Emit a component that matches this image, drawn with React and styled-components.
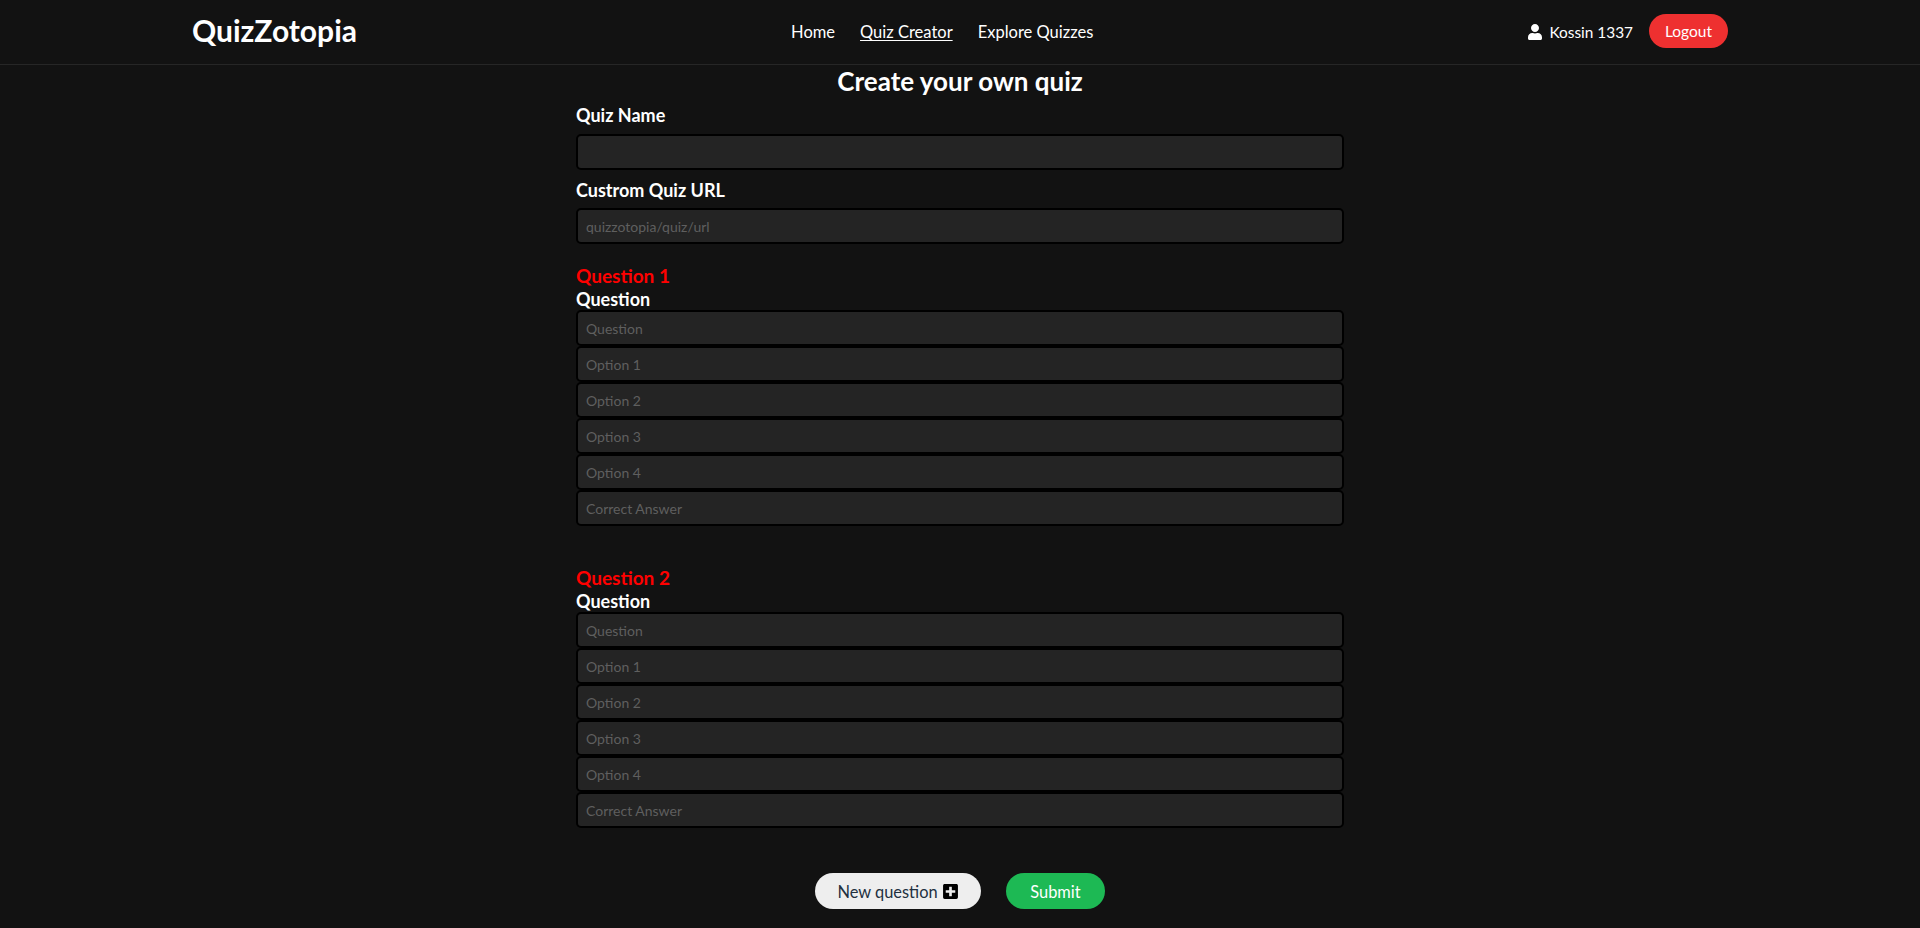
import React from "react";
import styled, { createGlobalStyle } from "styled-components";
import { FaUser, FaPlusSquare } from "react-icons/fa";

const Global = createGlobalStyle`
  html, body { margin: 0; padding: 0; background: #121212; }
  body { font-family: "Lato", "Liberation Sans", sans-serif; color: #fff; }
  * { box-sizing: border-box; }
`;

const Page = styled.div`
  min-height: 928px;
  background: #121212;
  display: flex;
  flex-direction: column;
`;

const Header = styled.header`
  height: 65px;
  border-bottom: 1px solid #262626;
  display: flex;
  justify-content: space-between;
  align-items: center;
  padding: 0 192px;
`;

const Logo = styled.div`
  font-size: 30px;
  font-weight: 700;
  line-height: 36px;
  margin-bottom: 5px;
`;

const Nav = styled.nav`
  display: flex;
  gap: 25px;
  font-size: 16.5px;
`;

const NavLink = styled.a`
  color: #fff;
  text-decoration: ${(p) => (p.$active ? "underline" : "none")};
  text-underline-offset: 2px;
`;

const UserArea = styled.div`
  display: flex;
  justify-content: flex-end;
  align-items: center;
  font-size: 15.4px;
`;

const UserName = styled.span`
  margin-left: 6px;
  margin-right: 16px;
`;

const Logout = styled.button`
  width: 79px;
  height: 34px;
  margin-bottom: 2px;
  border: 0;
  border-radius: 17px;
  background: #ee3030;
  color: #fff;
  font: 15.5px "Lato", sans-serif;
`;

const Form = styled.main`
  width: 768px;
  margin: 0 auto;
  display: flex;
  flex-direction: column;
`;

const Title = styled.h1`
  margin: 0;
  height: 38px;
  font-size: 26px;
  line-height: 32px;
  font-weight: 700;
  text-align: center;
`;

const Label = styled.label`
  display: block;
  font-size: 18px;
  font-weight: 700;
  line-height: ${(p) => p.$lh || 24}px;
  margin-bottom: ${(p) => p.$gap || 0}px;
`;

const Input = styled.input`
  display: block;
  width: 100%;
  height: 36px;
  padding: 0 8px;
  margin-bottom: ${(p) => p.$gap || 0}px;
  background: #242424;
  border: 2px solid #000;
  border-radius: 5px;
  outline: none;
  color: #fff;
  font: 14px "Lato", sans-serif;
  &::placeholder { color: #5f5f5f; opacity: 1; }
`;

const QuestionBlock = styled.section`
  margin-bottom: 40px;
`;

const QuestionTitle = styled.h2`
  margin: 0;
  font-size: 19px;
  line-height: 24px;
  font-weight: 700;
  color: #ff0000;
`;

const Actions = styled.div`
  display: flex;
  justify-content: center;
  gap: 25px;
  margin-top: 5px;
`;

const PillButton = styled.button`
  height: 36px;
  width: ${(p) => p.$w}px;
  border: 0;
  border-radius: 18px;
  background: ${(p) => p.$bg};
  color: ${(p) => p.$fg};
  font: 16.4px "Lato", sans-serif;
  display: flex;
  align-items: center;
  justify-content: center;
  gap: 4px;
`;

const fields = ["Question", "Option 1", "Option 2", "Option 3", "Option 4", "Correct Answer"];

export default function App() {
  return (
    <Page>
      <Global />
      <Header>
        <Logo>QuizZotopia</Logo>
        <Nav>
          <NavLink>Home</NavLink>
          <NavLink $active>Quiz Creator</NavLink>
          <NavLink>Explore Quizzes</NavLink>
        </Nav>
        <UserArea>
          <FaUser size={16} />
          <UserName>Kossin 1337</UserName>
          <Logout>Logout</Logout>
        </UserArea>
      </Header>
      <Form>
        <Title>Create your own quiz</Title>
        <Label $gap={7}>Quiz Name</Label>
        <Input $gap={8} />
        <Label $gap={6}>Custrom Quiz URL</Label>
        <Input $gap={20} placeholder="quizzotopia/quiz/url" />
        {[1, 2].map((n) => (
          <QuestionBlock key={n}>
            <QuestionTitle>Question {n}</QuestionTitle>
            <Label $lh={22}>Question</Label>
            {fields.map((f) => (
              <Input key={f} placeholder={f} />
            ))}
          </QuestionBlock>
        ))}
        <Actions>
          <PillButton $w={166} $bg="#eeeeee" $fg="#22303f">
            New question <FaPlusSquare size={17} color="#000" />
          </PillButton>
          <PillButton $w={99} $bg="#1db954" $fg="#fff">Submit</PillButton>
        </Actions>
      </Form>
    </Page>
  );
}
